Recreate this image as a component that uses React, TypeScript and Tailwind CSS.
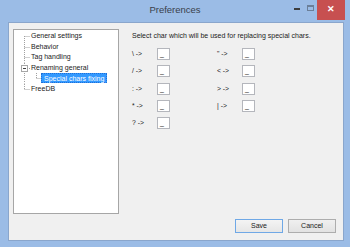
import React from 'react';

const font = { fontFamily: '"Liberation Sans", Arial, sans-serif' };

type TreeRow = { label: string; kind: 'first' | 'mid' | 'parent' | 'child' | 'last' };

const rows: TreeRow[] = [
  { label: 'General settings', kind: 'first' },
  { label: 'Behavior', kind: 'mid' },
  { label: 'Tag handling', kind: 'mid' },
  { label: 'Renaming general', kind: 'parent' },
  { label: 'Special chars fixing', kind: 'child' },
  { label: 'FreeDB', kind: 'last' },
];

function Connector({ kind }: { kind: TreeRow['kind'] }) {
  const line = { stroke: '#a0a0a0', strokeWidth: 1, strokeDasharray: '1 1' };
  const w = kind === 'child' ? 28 : 17;
  return (
    <svg width={w} height="10.5" className="shrink-0">
      {kind === 'first' && <line x1="10.5" y1="5" x2="10.5" y2="10.5" {...line} />}
      {(kind === 'mid' || kind === 'child') && <line x1="10.5" y1="0" x2="10.5" y2="10.5" {...line} />}
      {kind === 'last' && <line x1="10.5" y1="0" x2="10.5" y2="5.5" {...line} />}
      {kind === 'parent' && (
        <>
          <line x1="10.5" y1="0" x2="10.5" y2="2.5" {...line} />
          <line x1="10.5" y1="8" x2="10.5" y2="10.5" {...line} />
          <line x1="13" y1="5.5" x2="16" y2="5.5" {...line} />
          <line x1="22.5" y1="8" x2="22.5" y2="10.5" {...line} />
          <rect x="7.5" y="2.5" width="6" height="6" fill="#fff" stroke="#a6a6a6" strokeWidth="1" />
          <line x1="9" y1="5.5" x2="12" y2="5.5" stroke="#404040" strokeWidth="1" />
        </>
      )}
      {kind === 'child' && (
        <>
          <line x1="22.5" y1="0" x2="22.5" y2="5.5" {...line} />
          <line x1="22.5" y1="5.5" x2="27" y2="5.5" {...line} />
        </>
      )}
      {kind !== 'parent' && kind !== 'child' && <line x1="10.5" y1="5.5" x2="16" y2="5.5" {...line} />}
    </svg>
  );
}

const pairs: [string, string | null][] = [
  ['\\ ->', '" ->'],
  ['/ ->', '< ->'],
  [': ->', '> ->'],
  ['* ->', '| ->'],
  ['? ->', null],
];

function CharBox() {
  return (
    <div className="w-[13px] h-[12px] bg-white border border-[#b4b6bc] text-[7px] leading-[10px] pl-[2px] text-[#222]">_</div>
  );
}

export default function App() {
  return (
    <div style={font} className="w-[350px] h-[247px] bg-[#9bbce6] flex flex-col overflow-hidden">
      {/* caption */}
      <div className="h-[22px] flex items-start shrink-0">
        <div className="w-[60px]" />
        <div className="flex-1 text-center text-[9.5px] leading-[20px] text-[#3a3f4a]">Preferences</div>
        <div className="w-[60px] flex items-start justify-end pr-[5px]">
          <div className="w-[14px] h-[15px] flex items-end justify-center pb-[5px]">
            <div className="w-[6px] h-[2px] bg-[#3d3d3d]" />
          </div>
          <div className="w-[14px] h-[15px] flex items-center justify-center">
            <div className="w-[7px] h-[6px] border border-[#6b7f99] border-t-2" />
          </div>
          <div className="w-[29px] h-[20px] bg-[#c75050] flex items-center justify-center text-white text-[9px] font-bold">✕</div>
        </div>
      </div>

      {/* client */}
      <div className="flex-1 ml-[8px] mr-[6px] mb-[6px] bg-[#f0f0f0] border border-[#8aa6cc] pt-[6px] pl-[4px] pr-[7px] pb-[7px] flex flex-col">
        <div className="flex h-[185px]">
          <div className="w-[106px] h-full bg-white border border-[#a6a6a6] pt-[1px] text-[7px] text-[#1a1a1a]">
            {rows.map((r) => (
              <div key={r.label} className="flex items-center h-[10.5px]">
                <Connector kind={r.kind} />
                {r.kind === 'child' ? (
                  <span className="bg-[#3399ff] text-white h-[10px] leading-[10px] px-[2px] border border-dotted border-[#1f6fd6] -ml-[1px]">
                    {r.label}
                  </span>
                ) : (
                  <span className="leading-[10px]">{r.label}</span>
                )}
              </div>
            ))}
          </div>

          <div className="ml-[13px] pt-[1px] text-[#1a1a1a]">
            <div className="text-[7px] leading-[12px]">Select char which will be used for replacing special chars.</div>
            <div className="mt-[6px] grid grid-cols-[25px_13px_47px_25px_13px] gap-y-[5.3px] items-center text-[6.8px]">
              {pairs.map(([a, b]) => (
                <React.Fragment key={a}>
                  <span>{a}</span>
                  <CharBox />
                  <span />
                  {b ? <span>{b}</span> : <span />}
                  {b ? <CharBox /> : <span />}
                </React.Fragment>
              ))}
            </div>
          </div>
        </div>

        <div className="mt-[5px] flex justify-end gap-[5px] text-[7px] text-[#1a1a1a]">
          <button className="w-[48px] h-[14px] border border-[#6fa8e6] bg-gradient-to-b from-[#f4f4f4] to-[#e6e6e6] leading-[12px]">Save</button>
          <button className="w-[48px] h-[14px] border border-[#adadad] bg-gradient-to-b from-[#f0f0f0] to-[#e2e2e2] leading-[12px]">Cancel</button>
        </div>
      </div>
    </div>
  );
}
